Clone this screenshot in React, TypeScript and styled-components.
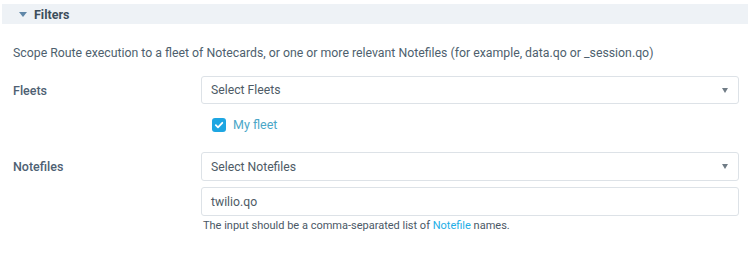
import React from "react";
import styled, { createGlobalStyle } from "styled-components";

const Global = createGlobalStyle`
  html, body { margin: 0; padding: 0; background: #ffffff; }
  body { font-family: Roboto, "Liberation Sans", Arial, sans-serif; color: #4e5f6e; }
`;

const Page = styled.div`
  width: 748px;
  height: 254px;
  padding-top: 4px;
  box-sizing: border-box;
`;

const SectionHeader = styled.div`
  margin-left: 2px;
  height: 20px;
  background: #eef2f6;
  display: flex;
  align-items: center;
  padding-left: 17px;
  gap: 7px;
`;

const Caret = styled.span`
  width: 0;
  height: 0;
  border-left: 4px solid transparent;
  border-right: 4px solid transparent;
  border-top: 5px solid #5f87a8;
`;

const HeaderTitle = styled.span`
  font-size: 12.5px;
  font-weight: 700;
  color: #3d4e5c;
`;

const Body = styled.div`
  padding: 0 9px 0 13px;
`;

const Description = styled.p`
  margin: 21px 0 0;
  font-size: 12.3px;
  line-height: 16px;
  color: #4e5f6e;
`;

const Row = styled.div<{ $top: number }>`
  display: grid;
  grid-template-columns: 188px 1fr;
  margin-top: ${(p) => p.$top}px;
`;

const Label = styled.div`
  font-size: 12.5px;
  font-weight: 500;
  color: #4e6173;
  height: 28px;
  display: flex;
  align-items: center;
`;

const Fields = styled.div`
  display: flex;
  flex-direction: column;
`;

const Box = styled.div<{ $height: number }>`
  height: ${(p) => p.$height}px;
  box-sizing: border-box;
  border: 1px solid #dde2e7;
  border-radius: 3px;
  display: flex;
  align-items: center;
  justify-content: space-between;
  padding: 0 10px 0 9px;
  font-size: 12.2px;
  color: #4e5b66;
  & + & { margin-top: 6px; }
`;

const Arrow = styled.span`
  width: 0;
  height: 0;
  border-left: 3.5px solid transparent;
  border-right: 3.5px solid transparent;
  border-top: 5px solid #707c86;
`;

const CheckRow = styled.label`
  display: flex;
  align-items: center;
  gap: 7px;
  margin: 13px 0 0 11px;
  font-size: 12.5px;
  color: #4ba7c8;
`;

const CheckBox = styled.span`
  width: 14px;
  height: 14px;
  border-radius: 3px;
  background: #1ea6e2;
  display: flex;
  align-items: center;
  justify-content: center;
`;

const Help = styled.div`
  margin: 3px 0 0 2px;
  font-size: 11px;
  color: #4a5866;
`;

const Link = styled.a`
  color: #23aee6;
  text-decoration: none;
`;

export default function App() {
  return (
    <>
      <Global />
      <Page>
        <SectionHeader>
          <Caret />
          <HeaderTitle>Filters</HeaderTitle>
        </SectionHeader>
        <Body>
          <Description>
            Scope Route execution to a fleet of Notecards, or one or more relevant Notefiles (for example, data.qo or _session.qo)
          </Description>
          <Row $top={15}>
            <Label>Fleets</Label>
            <Fields>
              <Box $height={28}>
                <span>Select Fleets</span>
                <Arrow />
              </Box>
              <CheckRow>
                <CheckBox>
                  <svg width="10" height="10" viewBox="0 0 10 10">
                    <path d="M1.8 5.2 L4 7.3 L8.3 2.8" stroke="#fff" strokeWidth="1.8" fill="none" strokeLinecap="round" strokeLinejoin="round" />
                  </svg>
                </CheckBox>
                My fleet
              </CheckRow>
            </Fields>
          </Row>
          <Row $top={20}>
            <Label>Notefiles</Label>
            <Fields>
              <Box $height={29}>
                <span>Select Notefiles</span>
                <Arrow />
              </Box>
              <Box $height={29}>
                <span>twilio.qo</span>
              </Box>
              <Help>
                The input should be a comma-separated list of <Link href="#">Notefile</Link> names.
              </Help>
            </Fields>
          </Row>
        </Body>
      </Page>
    </>
  );
}
